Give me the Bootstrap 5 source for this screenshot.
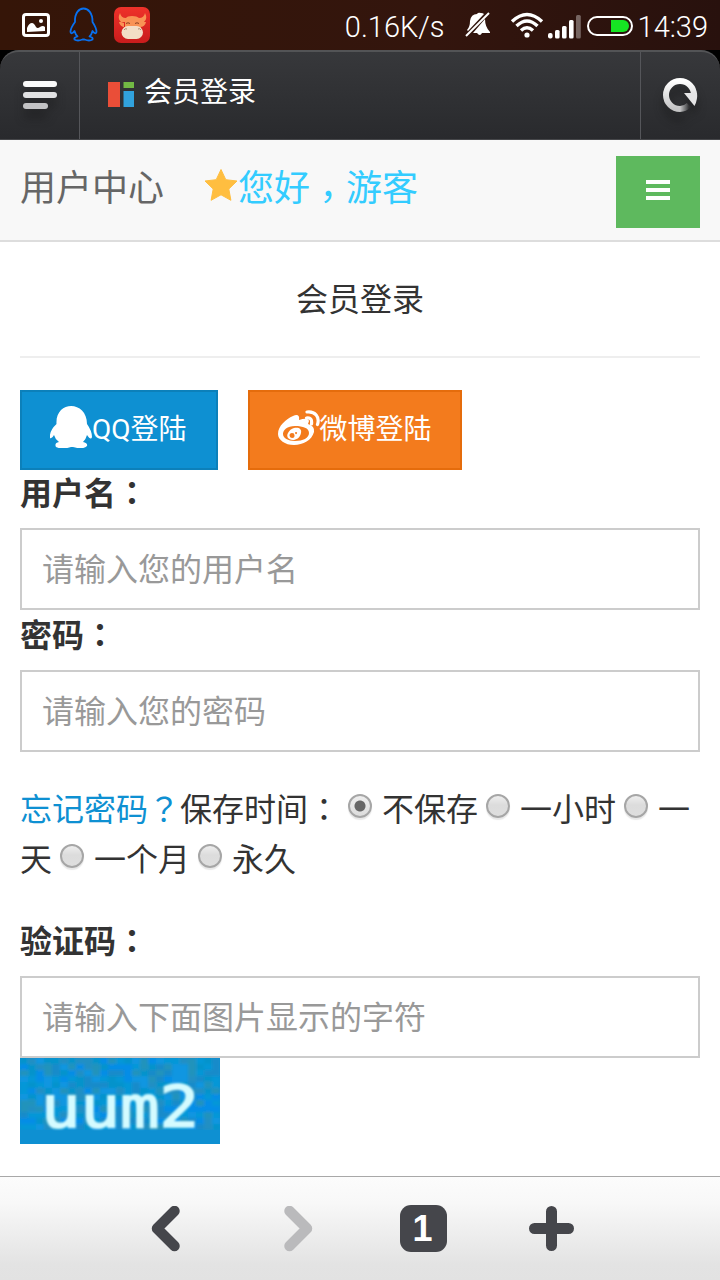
<!DOCTYPE html>
<html lang="zh-CN">
<head>
<meta charset="utf-8">
<meta name="viewport" content="width=device-width, initial-scale=1">
<title>会员登录</title>
<link rel="stylesheet" href="https://cdn.jsdelivr.net/npm/bootstrap@5.3.0/dist/css/bootstrap.min.css">
<style>
body{font-family:"Noto Sans CJK SC",sans-serif;font-size:32px;color:#333;line-height:50px;background:#fff;overflow:hidden}
svg{display:block;flex:none}
.screen{height:1280px}
.status-bar{height:50px;background:linear-gradient(90deg,#351508,#33150d 60%,#28110d);color:#fff;font:300 29px/50px Roboto,sans-serif;padding:0 12px 0 22px}
.status-bar span{padding-top:4px}
.title-wrap{background:#000;height:90px}
.title-bar{height:90px;background:linear-gradient(#37383b,#292a2d);border-top:2px solid #535456;border-bottom:1px solid #46474a;border-radius:19px 19px 0 0;color:#fff;font-size:28px}
.title-menu{width:80px;border-right:1px solid #55565a}
.title-reload{width:80px;border-left:1px solid #55565a}
.site-nav{height:102px;background:#f8f8f8;border-bottom:2px solid #ddd;font-size:36px;color:#666;padding:0 20px}
.hello{color:#3cf;margin-left:40px}
.mid{font-family:"Noto Sans CJK TC",sans-serif}
.low{display:inline-block;line-height:1;padding-top:12px;margin-bottom:-12px;vertical-align:-9px}
.menu-btn{width:84px;height:72px;background:#5eb95e;border-radius:0;margin-top:4px}
.page-title{height:116px;border-bottom:2px solid #eee;font-size:32px;line-height:110px;font-weight:400}
.btn-login{height:80px;border-radius:0;border-width:2px;color:#fff;font:400 28px/40px Roboto,"Noto Sans CJK SC",sans-serif;padding:0 28px}
.btn-qq{background:#0e90d2;border-color:#0c80ba}
.btn-weibo{background:#f37b1d;border-color:#e56c0c}
.field-label{display:block;font-weight:700;line-height:42px;padding-bottom:16px}
.form-control.field{height:82px;border:2px solid #ccc;border-radius:0;font-size:32px;line-height:48px;padding:13px 20px 17px;color:#555;background:#fff}
.field::placeholder{color:#999}
.forget{color:#0e90d2}
.keep{margin:30px 0 36px}
.radio-old{appearance:none;display:inline-block;width:24px;height:24px;margin:0 10px 0 8px;vertical-align:3px;border:2px solid #a6a6a6;border-radius:50%;background:linear-gradient(#eee,#dcdcdc 45%,#dedede);box-shadow:0 2px 1px #e8e8e8}
.radio-old:checked{background:radial-gradient(circle,#666 5px,transparent 6px),linear-gradient(#eee,#dcdcdc)}
.tool-bar{height:104px;border-top:1px solid #a8a8a8;background:linear-gradient(#fcfcfc,#f8f8f8 25%,#e3e3e3 85%,#e2e2e2)}
</style>
</head>
<body>
<div class="screen d-flex flex-column">
  <div class="status-bar d-flex align-items-center">
    <svg width="28" height="24" viewBox="0 0 28 24"><rect x="1.500" y="1.500" width="25" height="21" rx="2.500" fill="none" stroke="#fff" stroke-width="3"/><circle cx="19" cy="8" r="2" fill="#fff"/><path d="M5 19v-4q2-5 5-5 2 0 4 4 1.500 2 4 0 3-2 5 0v4z" fill="#fff"/></svg>
    <svg width="34" height="36" viewBox="0 0 34 36" style="margin-left:17px"><path d="M8 15C7-3 26-3 25.500 15q4 6 4 10-1 3-4-1-1 4-3 5.500 4 1 3 3-3 2-8 0h-2q-5 2-8 0-1-2 3-3-2-2-3-5.500-3 4-4 1Q3.500 21 8 15z" fill="none" stroke="#0870ef" stroke-width="1.800" stroke-linejoin="round"/></svg>
    <svg width="36" height="36" viewBox="0 0 36 36" style="margin-left:13px"><defs><linearGradient id="cow" x2="0" y2="1"><stop stop-color="#ef322a"/><stop offset="1" stop-color="#c91c1c"/></linearGradient></defs><rect width="36" height="36" rx="7" fill="url(#cow)"/><path d="M6 6q-3 6 1 9l3 1v6h17v-6l3-1q4-3 1-9-1 5-6 5-2-2-7-2t-6 2q-5 0-6-5zM5 15l6 0v5q-5 0-6-5zm27 0h-6v5q5 0 6-5z" fill="#f99355"/><path d="M12 16.500q2-1.500 4 0m5 0q2-1.500 4 0" stroke="#8a4020" fill="none"/><rect x="7.500" y="19" width="21.500" height="13" rx="6.500" fill="#f3dec6"/><path d="M10 23q1-2 3-1m11 0q2-1 3 1" stroke="#a88c72" fill="none"/></svg>
    <span class="ms-auto">0.16K/s</span>
    <svg width="26" height="26" viewBox="0 0 26 26" style="margin-left:20px"><path d="M2 18Q5 15 5 9q1-7 7-7 1-2 4-1 2 0 3 1L3 19zM20 7q0 8 5 13v1h-8q-2 4-5 0H8z" fill="#fff"/><path d="M1 24L24 1" stroke="#fff" stroke-width="2"/></svg>
    <svg width="34" height="26" viewBox="0 0 34 26" style="margin-left:19px"><g fill="none" stroke="#fff" stroke-width="3.400"><path d="M2 9.500Q17-4.500 32 9.500"/><path d="M6.500 14Q17 4 27.500 14"/><path d="M11 18.500q6-5.500 12 0"/></g><circle cx="17" cy="23" r="2.600" fill="#fff"/></svg>
    <svg width="33" height="24" viewBox="0 0 33 24" style="margin:3px 0 0 4px"><g fill="#fff"><rect y="18" width="4.600" height="5.500" rx="2"/><rect x="7" y="15" width="4.600" height="8.500" rx="1.500"/><rect x="14" y="11" width="4.600" height="12.500" rx="1.500"/><rect x="21" y="5" width="4.600" height="18.500" rx="1.500"/><rect x="28" width="4.800" height="23.500" rx="1.500" opacity=".35"/></g></svg>
    <svg width="46" height="20" viewBox="0 0 46 20" style="margin:2px 0 0 6px"><rect x="1" y="1" width="44" height="18" rx="9" fill="none" stroke="#fff" stroke-width="2"/><path d="M24 4h12a6 6 0 0 1 0 12H24z" fill="#16e523"/></svg>
    <span style="margin-left:5px">14:39</span>
  </div>
  <div class="title-wrap">
    <div class="title-bar d-flex">
      <div class="title-menu d-flex align-items-center justify-content-center">
        <svg width="46" height="46" viewBox="0 0 46 46" style="margin-top:-2px;filter:drop-shadow(0 9px 5px #1117)"><rect x="6" y="9" width="34" height="6" rx="3" fill="#fafafa"/><rect x="6" y="20" width="34" height="6" rx="3" fill="#e2e2e3"/><rect x="6" y="31" width="25" height="6" rx="3" fill="#c2c2c4"/></svg>
      </div>
      <div class="d-flex flex-fill align-items-center" style="padding-left:28px">
        <svg width="26" height="25" viewBox="0 0 26 25" style="margin-top:-2px"><path fill="#ea4e38" d="M0 0h12v25H0z"/><path fill="#72b944" d="M15.500 0H26v6H15.500z"/><path fill="#31a2dd" d="M15.500 9H26v16H15.500z"/></svg>
        <span style="margin:-12px 0 0 10px">会员登录</span>
      </div>
      <div class="title-reload d-flex align-items-center justify-content-center">
        <svg width="46" height="46" viewBox="0 0 46 46" style="margin:-2px 2px 0 0;filter:drop-shadow(0 9px 5px #1117)"><defs><linearGradient id="rl" x2="0" y2="1"><stop stop-color="#fff"/><stop offset="1" stop-color="#c4c4c5"/></linearGradient><linearGradient id="tail" x1="0" x2="1"><stop stop-color="#c8c8c9"/><stop offset="1" stop-color="#c8c8c9" stop-opacity=".05"/></linearGradient></defs><path d="M23 37A14 14 0 1 1 37 23" fill="none" stroke="url(#rl)" stroke-width="6"/><path d="M23 37q5 0 9-4" fill="none" stroke="url(#tail)" stroke-width="6"/><path d="M27 21h13q1 6-2.500 13z" fill="#e5e5e6"/></svg>
      </div>
    </div>
  </div>
  <nav class="site-nav d-flex align-items-center">
    <span style="margin-top:-11px">用户中心</span>
    <span class="hello d-flex align-items-center" style="margin-top:-11px">
      <svg width="34" height="34" viewBox="0 0 34 34"><path fill="#ffbe40" stroke="#ffbe40" stroke-linejoin="round" d="M17 1.500l4.800 10.200L33 13l-8.200 8 2.100 11.300L17 26.800l-9.900 5.500L9.200 21 1 13l11.200-1.300z"/></svg>
      <span>您好<span class="mid low" lang="zh-TW">，</span>游客</span>
    </span>
    <button class="menu-btn btn ms-auto p-0 border-0 d-flex align-items-center justify-content-center" aria-label="菜单">
      <svg width="24" height="20" viewBox="0 0 24 20" style="margin-top:-4px"><path d="M0 0h24v4H0zM0 8h24v4H0zM0 16h24v4H0z" fill="#fff"/></svg>
    </button>
  </nav>
  <main class="flex-fill overflow-hidden" style="padding:0 20px">
    <h1 class="page-title text-center m-0">会员登录</h1>
    <div class="d-flex" style="gap:30px;margin-top:32px">
      <button class="btn btn-login btn-qq d-flex align-items-center"><svg width="42" height="42" viewBox="0 0 42 42" style="margin-top:-6px"><path fill="#fff" d="M6.500 18C5-6 37-6 37 18q5 7 5 13-1 4-5-2-1 4-4 7 5 1 4 4-4 4-14 1h-2q-9 3-15 0-2-4 3-5-4-3-5-7-2 4-4 3Q-1 25 6.500 18z"/></svg><span style="margin-right:1px">QQ登陆</span></button>
      <button class="btn btn-login btn-weibo d-flex align-items-center"><svg width="42" height="36" viewBox="0 0 42 36" style="margin-top:-5px"><path fill="#fff" fill-rule="evenodd" d="M15 6c4-2 7-1 6 4q9-3 10 1l-1 3q7 2 6 8C34 30 25 35 16 35 7 35 0 30 0 24 0 16 8 9 15 6zM17 16C9 16 5 20 5 24s5 7 12 7c8 0 14-3 14-8s-6-7-14-7z"/><path fill="#fff" fill-rule="evenodd" d="M16 18c5-1 8 1 7 5-1 5-5 7-8 7-5 0-7-4-5-7q2-4 6-5zM14 23a2.500 2.500 0 1 0 .1 5A2.500 2.500 0 0 0 14 23zM18 22a1 1 0 1 0 .1 0z"/><path d="M28.500 8q6-1 5 6M29 2c8-1 13 5 10.500 12.500" fill="none" stroke="#fff" stroke-width="3.200" stroke-linecap="round"/></svg><span>微博登陆</span></button>
    </div>
    <label class="field-label" for="user">用户名<span class="mid" lang="zh-TW">：</span></label>
    <input id="user" class="form-control field" placeholder="请输入您的用户名">
    <label class="field-label" for="pass" style="margin-top:2px">密码<span class="mid" lang="zh-TW">：</span></label>
    <input id="pass" class="form-control field" type="password" placeholder="请输入您的密码">
    <div class="keep"><a class="forget text-decoration-none" href="#">忘记密码<span class="mid" lang="zh-TW">？</span></a>保存时间<span class="mid" lang="zh-TW">：</span><input class="radio-old" type="radio" name="keep" checked>不保存<input class="radio-old" type="radio" name="keep">一小时<input class="radio-old" type="radio" name="keep">一<wbr>天<input class="radio-old" type="radio" name="keep">一个月<input class="radio-old" type="radio" name="keep">永久</div>
    <label class="field-label" for="code">验证码<span class="mid" lang="zh-TW">：</span></label>
    <input id="code" class="form-control field" placeholder="请输入下面图片显示的字符">
    <svg width="200" height="86" viewBox="0 0 200 86">
      <defs>
        <filter id="soft" x="0" y="0" width="100%" height="100%"><feGaussianBlur stdDeviation="1.500"/></filter>
        <filter id="glyph"><feGaussianBlur stdDeviation=".8"/></filter>
      </defs>
      <rect width="200" height="86" fill="#0e90d2"/>
      <g id="noise" filter="url(#soft)"></g>
      <text x="21" y="69" font-family="DejaVu Sans Mono" font-size="57" textLength="158" lengthAdjust="spacingAndGlyphs" fill="#d4fbff" stroke="#d4fbff" stroke-width="1.800" filter="url(#glyph)">uum2</text>
    </svg>
  </main>
  <div class="tool-bar">
    <div class="d-flex align-items-center" style="padding:28px 0 0 151px">
      <svg width="30" height="46" viewBox="0 0 30 46"><path d="M23.500 5L6 22.500 23.500 40" fill="none" stroke="#45464b" stroke-width="10.500" stroke-linecap="round" stroke-linejoin="round"/></svg>
      <svg width="30" height="46" viewBox="0 0 30 46" style="margin-left:103px"><path d="M5.500 5L23 22.500 5.500 40" fill="none" stroke="#bababc" stroke-width="10.500" stroke-linecap="round" stroke-linejoin="round"/></svg>
      <svg width="47" height="47" viewBox="0 0 47 47" style="margin-left:86px"><rect width="47" height="47" rx="11" fill="#45464b"/><text x="22.500" y="36" text-anchor="middle" font-family="Liberation Sans" font-weight="700" font-size="36" fill="#fff">1</text></svg>
      <svg width="46" height="46" viewBox="0 0 46 46" style="margin-left:82px"><path d="M22.500 5.500v34M5.500 22.500h34" stroke="#45464b" stroke-width="11" stroke-linecap="round"/></svg>
    </div>
  </div>
</div>
<script src="https://cdn.jsdelivr.net/npm/bootstrap@5.3.0/dist/js/bootstrap.bundle.min.js"></script>
<script>
// speckled background of the verification picture
const tones = ['#0099d8','#058cee','#268fbf','#0094c8','#178ac7','#0b98e5','#2593b4'];
let seed = 7, cells = '';
for (let y = 0; y < 68; y += 6)
  for (let x = 0; x < 200; x += 8) {
    seed = (seed * 1103515245 + 12345) % 2147483648;
    cells += `<rect x="${x}" y="${y}" width="8" height="6" fill="${tones[(seed >> 12) % 7]}" opacity=".75"/>`;
  }
document.getElementById('noise').innerHTML = cells;
</script>
</body>
</html>
